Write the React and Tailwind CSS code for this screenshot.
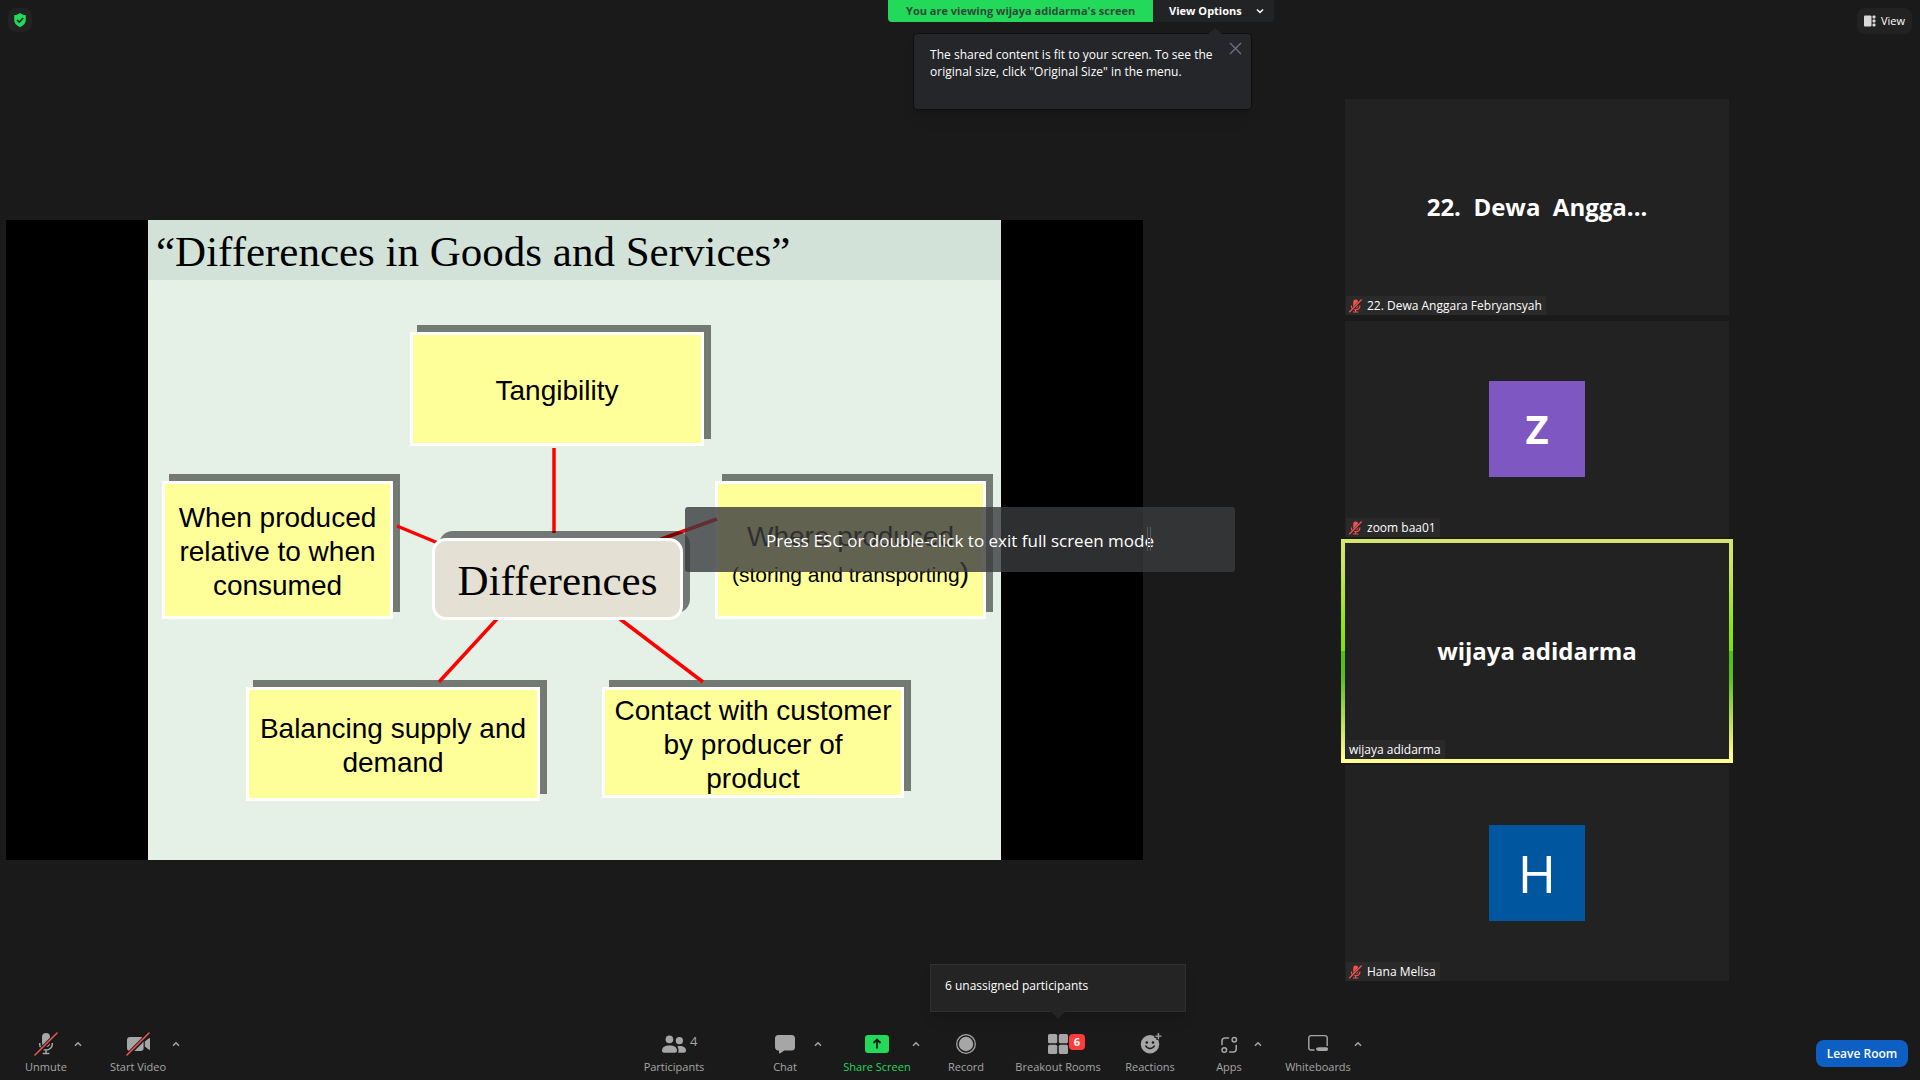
import clsx from "clsx";

const nodes = [
  { id: "tangibility", className: "left-[262px] top-[112px] w-[294px] h-[114px]", lines: ["Tangibility"] },
  { id: "when", className: "left-[14px] top-[261px] w-[231px] h-[138px]", lines: ["When produced", "relative to when", "consumed"] },
  { id: "balancing", className: "left-[98px] top-[467px] w-[294px] h-[114px]", lines: ["Balancing supply and", "demand"] },
  { id: "contact", className: "left-[454px] top-[467px] w-[302px] h-[111px]", lines: ["Contact with customer", "by producer of", "product"] },
];

const participants = [
  { name: "22. Dewa Anggara Febryansyah", title: "22.\u00a0 Dewa\u00a0 Angga...", muted: true },
  { name: "zoom baa01", initial: "Z", avatar: "bg-[#7e57c2] text-[40px] font-bold", muted: true },
  { name: "wijaya adidarma", title: "wijaya adidarma", speaking: true },
  { name: "Hana Melisa", initial: "H", avatar: "bg-[#00569f] text-[52px] font-medium", muted: true },
];

function Icon({ children }) {
  return (
    <svg width="24" height="24" viewBox="0 0 24 24" fill="currentColor" aria-hidden="true">
      {children}
    </svg>
  );
}

function Slash() {
  return (
    <>
      <path d="M1 23.5 23.5 1" stroke="#1a1a1a" strokeWidth="4" />
      <path d="M1 23 23 1" stroke="#f0524f" strokeWidth="1.6" strokeLinecap="round" />
    </>
  );
}

const icons = {
  mic: (
    <Icon>
      <rect x="8" y="1" width="8" height="14" rx="4" />
      <path d="M5.7 11v1.2a6.3 5.8 0 0 0 12.6 0V11M12 18v3.5M8.7 21.6h6.6" fill="none" stroke="currentColor" strokeWidth="1.5" />
      <Slash />
    </Icon>
  ),
  video: (
    <Icon>
      <rect x="1" y="5" width="16.6" height="14" rx="3" />
      <path d="M18.8 9.5 22.6 6.4c.8-.6 1.4-.3 1.4.6v10c0 .9-.6 1.2-1.4.6l-3.8-3.1z" />
      <Slash />
    </Icon>
  ),
  people: (
    <Icon>
      <circle cx="7.4" cy="7.4" r="3.8" />
      <path d="M0 18.6c0-3.4 2.8-5.2 7.5-5.2s7.5 1.8 7.5 5.2c0 1.6-.8 2.2-2.2 2.2H2.2C.8 20.8 0 20.2 0 18.6z" />
      <circle cx="17.4" cy="8.7" r="3.6" />
      <path d="M15.4 14.3c5-.8 8.6.8 8.6 4.3 0 1.6-.8 2.2-2.2 2.2h-5.600c.6-2.400.4-4.800-.8-6.500z" />
    </Icon>
  ),
  chat: (
    <Icon>
      <path d="M5.5 3h13A3.5 3.5 0 0 1 22 6.5V15a3.5 3.5 0 0 1-3.5 3.5h-7.300L7.300 21.300c-.7.400-1.300.2-1.300-.6v-2.200A3.500 3.500 0 0 1 2 15V6.500A3.500 3.500 0 0 1 5.500 3z" />
    </Icon>
  ),
  share: (
    <Icon>
      <rect y="3" width="24" height="18" rx="3" />
      <path d="M12 16.5V8M8.5 11 12 7.5l3.5 3.5" fill="none" stroke="#1a1a1a" strokeWidth="1.8" />
    </Icon>
  ),
  record: (
    <Icon>
      <circle cx="12" cy="12" r="9.3" fill="none" stroke="currentColor" strokeWidth="1.3" />
      <circle cx="12" cy="12" r="7.2" />
    </Icon>
  ),
  rooms: (
    <Icon>
      <rect x="2" y="2" width="9.2" height="9.2" rx="1.5" />
      <rect x="12.8" y="2" width="9.2" height="9.2" rx="1.5" />
      <rect x="2" y="12.8" width="9.2" height="9.2" rx="1.5" />
      <rect x="12.8" y="12.8" width="9.2" height="9.2" rx="1.5" />
    </Icon>
  ),
  reactions: (
    <Icon>
      <circle cx="12" cy="12.3" r="9.2" />
      <circle cx="8.8" cy="10.5" r="1.3" fill="#1a1a1a" />
      <circle cx="15" cy="10.5" r="1.3" fill="#1a1a1a" />
      <path d="M7.8 14c1.6 3.2 6.8 3.2 8.4 0" fill="none" stroke="#1a1a1a" strokeWidth="1.5" strokeLinecap="round" />
      <path d="M20.4 0v8M16.4 4h8" stroke="#1a1a1a" strokeWidth="4" />
      <path d="M20.4 1v6.2M17.3 4.1h6.2" stroke="currentColor" strokeWidth="1.4" />
    </Icon>
  ),
  apps: (
    <Icon>
      <g fill="none" stroke="currentColor" strokeWidth="1.5" strokeLinecap="round">
        <path d="M5 12.500V9a3 3 0 0 1 3-3h3.500" />
        <path d="M19.200 13.500V17a3 3 0 0 1-3 3h-3.500" />
        <circle cx="17.3" cy="7.8" r="2.2" />
        <circle cx="7.3" cy="18" r="2.3" />
      </g>
    </Icon>
  ),
  whiteboard: (
    <Icon>
      <path d="M8.5 18H5a2.2 2.2 0 0 1-2.2-2.2V5.800A2.200 2.200 0 0 1 5 3.600h14a2.200 2.200 0 0 1 2.200 2.200V14" fill="none" stroke="currentColor" strokeWidth="1.4" />
      <path d="M13 15.200h7.400c1.200 0 1.600.7 1.600 1.900s-.4 1.900-1.600 1.900H13c-1.900 0-2.900-.7-2.900-1.900s1-1.900 2.900-1.900z" />
    </Icon>
  ),
};

function Caret({ label }) {
  return (
    <button aria-label={label} className="w-2 h-6 flex items-center justify-center">
      <svg width="8" height="6" viewBox="0 0 8 6" fill="none" stroke="currentColor" strokeWidth="1.5">
        <path d="M1 4.7 4 1.7l3 3" />
      </svg>
    </button>
  );
}

function Tool({ icon, label, className, caret, children }) {
  return (
    <div className="flex items-start">
      <button className={clsx("relative flex flex-col items-center gap-[3px] whitespace-nowrap", className)}>
        {icons[icon]}
        <span className="text-[11px] leading-4 font-medium">{label}</span>
        {children}
      </button>
      {caret && <Caret label={`${label} options`} />}
    </div>
  );
}

function MutedMic() {
  return (
    <svg width="14" height="14" viewBox="0 0 14 14" fill="#f0524f" aria-label="Muted">
      <rect x="4.2" y="0.5" width="5" height="8.5" rx="2.5" />
      <path d="M2.4 6.5c0 5.5 8.500 5.500 8.500 0M6.600 10.500v2.300M3.900 13h5.500" fill="none" stroke="#f0524f" strokeWidth="1.2" />
      <path d="M.2 13.800 12.700.8" stroke="#2a2a2a" strokeWidth="2.6" />
      <path d="M.2 13.300 12.700.5" stroke="#f0524f" strokeWidth="1.3" />
    </svg>
  );
}

function Tile({ person }) {
  return (
    <div
      className={clsx(
        person.speaking &&
          "-m-1 p-1 bg-[linear-gradient(to_bottom,#d4e56c_0%,#d0e468_10%,#8ae60a_40%,#80e00c_50%,#4fc010_50%,#5cbf20_62%,#d8e870_88%,#ffff90_98%)]"
      )}
    >
      <div className="w-96 aspect-video bg-[#222222] grid grid-rows-[1fr] relative">
        <div className="flex items-center justify-center">
          {person.initial ? (
            <div className={clsx("size-24 flex items-center justify-center text-white leading-none", person.avatar)}>
              {person.initial}
            </div>
          ) : (
            <h2 className="text-2xl font-bold">{person.title}</h2>
          )}
        </div>
        <div className="absolute left-px bottom-0 h-[19px] bg-[#2a2a2a] flex items-center gap-1 px-[3px]">
          {person.muted && <MutedMic />}
          <span className="text-xs leading-none pr-px">{person.name}</span>
        </div>
      </div>
    </div>
  );
}

const nodeStyle = "absolute border-[3px] border-white shadow-[7px_-7px_0_#737a74] bg-[#ffff99] flex flex-col items-center justify-center whitespace-nowrap text-[28px]";

function Slide() {
  return (
    <div className="relative w-[853px] h-[640px] bg-[#e5f0e6] text-black font-['Liberation_Sans',Arial,sans-serif]">
      <h1 className="h-[60px] pl-2 pt-[5px] bg-[#d3e2d8] text-[43px] leading-[54px] whitespace-nowrap font-['Liberation_Serif',serif]">
        “Differences in Goods and Services”
      </h1>

      {nodes.map((node) => (
        <div key={node.id} className={clsx(nodeStyle, "pt-1 leading-[34px]", node.className)}>
          {node.lines.map((line) => (
            <span key={line}>{line}</span>
          ))}
        </div>
      ))}
      <div className={clsx(nodeStyle, "pt-3 leading-[36px] left-[567px] top-[261px] w-[271px] h-[138px]")}>
        <span>Where produced</span>
        <span className="text-[21px]">
          (storing and transporting<span className="text-[28px]">)</span>
        </span>
      </div>

      <svg className="absolute inset-0" width="853" height="640" viewBox="0 0 853 640" stroke="#ff0000" strokeWidth="3.5" aria-hidden="true">
        <path d="M406 228V313M249 306 290 323M569 299 508 321M349 399 291 462M472 399 555 462" />
      </svg>

      <div className="absolute left-[284px] top-[318px] w-[251px] h-[82px] rounded-[14px] border-[3px] border-white bg-[#e4e0d3] shadow-[7px_-7px_0_rgba(0,0,0,0.5)] flex items-center justify-center pt-1 text-[43px] font-['Liberation_Serif',serif]">
        Differences
      </div>
    </div>
  );
}

export default function App() {
  return (
    <div className="min-h-screen flex flex-col bg-[#1a1a1a] text-white overflow-hidden font-['Open_Sans','Noto_Sans',sans-serif]">
      <header className="h-[60px] grid grid-cols-[11fr_auto_8fr] items-start">
        <button aria-label="Meeting information" className="m-2 size-6 rounded-lg bg-[#222222] flex items-center justify-center">
          <svg width="14" height="16" viewBox="0 0 14 16" aria-hidden="true">
            <path d="M7 1c1.6 1.3 3.5 2 5.8 2.2V8c0 3.3-2.2 5.6-5.8 7.2C3.4 13.6 1.2 11.3 1.2 8V3.2C3.5 3 5.4 2.3 7 1z" fill="#23d959" />
            <path d="m4 8 2.2 2.2L10.2 6" fill="none" stroke="#1a1a1a" strokeWidth="1.6" />
          </svg>
        </button>

        <div className="relative flex h-[22px] text-[11px] font-bold whitespace-nowrap">
          <div className="w-[265px] bg-[#23d959] text-[#2f4a3a] flex items-center justify-center rounded-bl">
            You are viewing wijaya adidarma's screen
          </div>
          <button className="w-[121px] bg-[#222325] rounded-br flex items-center justify-between pl-4 pr-[10px]">
            View Options
            <svg width="8" height="6" viewBox="0 0 8 6" fill="none" stroke="currentColor" strokeWidth="1.5" aria-hidden="true">
              <path d="m1 1.5 3 3 3-3" />
            </svg>
          </button>

          <div role="tooltip" className="absolute z-10 left-[25px] top-[33px] w-[339px] h-[77px] rounded border border-[#0e0e0f] bg-[#25262a] pl-4 pt-3 text-[12px] leading-[17px] font-normal shadow-lg">
            <svg className="absolute -top-[7px] right-7" width="16" height="8" viewBox="0 0 16 8" aria-hidden="true">
              <path d="M0 8 8 1l8 7z" fill="#25262a" />
            </svg>
            The shared content is fit to your screen. To see the
            <br />
            original size, click "Original Size" in the menu.
            <button aria-label="Close" className="absolute right-[9px] top-2">
              <svg width="13" height="13" viewBox="0 0 13 13" stroke="#6e6e80" strokeWidth="1.4" aria-hidden="true">
                <path d="m1 1 11 11M12 1 1 12" />
              </svg>
            </button>
          </div>
        </div>

        <button className="justify-self-end m-2 h-[26px] w-[55px] rounded-lg bg-[#222222] flex items-center justify-center gap-[5px] text-[11px]">
          <svg width="12" height="12" viewBox="0 0 12 12" fill="#d8d8d8" aria-hidden="true">
            <rect y="0.5" width="7.5" height="11" rx="1" />
            <rect x="8.5" y="0.5" width="3" height="3" rx="1" />
            <rect x="8.5" y="4.5" width="3" height="3" rx="1" />
            <rect x="8.5" y="8.5" width="3" height="3" rx="1" />
          </svg>
          View
        </button>
      </header>

      <main className="flex-1 grid grid-cols-[3fr_2fr] items-center">
        <section className="relative ml-[6px] mr-[9px] bg-black flex justify-center">
          <Slide />
          <div className="absolute left-[679px] top-[287px] w-[550px] h-[65px] rounded-[3px] bg-[#3a3b3d]/80 flex items-center justify-center pt-[2px] text-[17px] whitespace-nowrap">
            Press ESC or double-click to exit full screen mode
            <span className="absolute left-[462px] top-5 h-6 w-1 border-x border-[#5a5a5a]" />
          </div>
        </section>
        <section className="flex flex-col items-center gap-[6px] pl-[2px]">
          {participants.map((person) => (
            <Tile key={person.name} person={person} />
          ))}
        </section>
      </main>

      <footer className="h-[60px] flex items-start justify-between pt-3 pl-[18px] pr-3 text-[#a6a6a6]">
        <div className="flex gap-[22px]">
          <Tool icon="mic" label="Unmute" className="w-14" caret />
          <Tool icon="video" label="Start Video" className="w-[68px]" caret />
        </div>

        <div className="flex gap-5 mr-[22px]">
          <Tool icon="people" label="Participants" className="w-[124px]">
            <span className="absolute left-[78px] top-0 text-[13px] leading-[18px]">4</span>
          </Tool>
          <Tool icon="chat" label="Chat" className="w-[58px]" caret />
          <Tool icon="share" label="Share Screen" className="w-[70px] text-[#23d959]" caret />
          <Tool icon="record" label="Record" className="w-[52px]" />
          <Tool icon="rooms" label="Breakout Rooms" className="w-[92px]">
            <span className="absolute left-[57px] top-[2px] size-4 rounded bg-[#ff3b3b] text-white text-[11px] leading-4 font-bold text-center">6</span>
            <span role="tooltip" className="absolute bottom-[63px] left-1/2 -translate-x-1/2 w-64 h-12 border border-[#303030] bg-[#242424] pl-[14px] text-left text-[12px] leading-[42px] text-white shadow-lg">
              6 unassigned participants
              <svg className="absolute -bottom-[8px] left-[119px]" width="16" height="8" viewBox="0 0 16 8" aria-hidden="true">
                <path d="M0 0h16L8 8z" fill="#242424" />
              </svg>
            </span>
          </Tool>
          <Tool icon="reactions" label="Reactions" className="w-[52px] mr-2" />
          <Tool icon="apps" label="Apps" className="w-[50px]" caret />
          <Tool icon="whiteboard" label="Whiteboards" className="w-[72px]" caret />
        </div>

        <button className="mt-2 w-[92px] h-[27px] rounded-lg bg-[#0e5fc4] text-white text-[12px] font-semibold">Leave Room</button>
      </footer>
    </div>
  );
}
